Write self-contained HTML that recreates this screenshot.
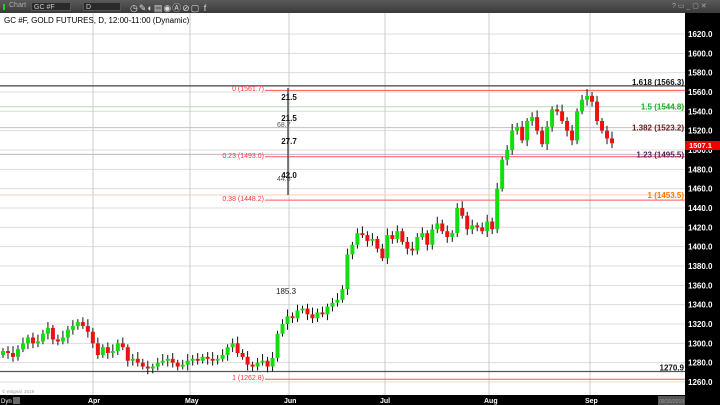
<!DOCTYPE html>
<html><head><style>
body{margin:0;width:720px;height:405px;overflow:hidden;background:#000;font-family:"Liberation Sans",sans-serif}
#tb{position:absolute;left:0;top:0;width:720px;height:13px;background:linear-gradient(#5a5a5a,#3a3a3a)}
.box{position:absolute;top:2px;height:9px;background:#2a2a2a;border:1px solid #555;color:#ccc;font-size:7px;line-height:9px;padding-left:2px;box-sizing:border-box}
#chart{position:absolute;left:0;top:13px;width:685px;height:382px;background:#fff}
</style></head><body>
<div id="tb">
<div style="position:absolute;left:3px;top:4px;width:2px;height:6px;background:#2c2"></div>
<div style="position:absolute;left:9px;top:2px;color:#aaa;font-size:7px">Chart</div>
<div class="box" style="left:31px;width:40px">GC #F</div>
<div class="box" style="left:83px;width:38px">D</div>
<div style="position:absolute;left:130px;top:1px;color:#ddd;font-size:9px;letter-spacing:1px">◷✎◐▤◉Ⓐ⊘▢ f</div>
<div style="position:absolute;left:672px;top:2px;color:#aaa;font-size:7px">? ▭ _ ▢ ✕</div>
</div>
<div id="chart"></div>
<svg id="s" width="720" height="405" style="position:absolute;left:0;top:0"></svg>
<script>
const Y=p=>34+(1620-p)*0.9667;
let h='';
h+='<rect x="685" y="13" width="35" height="392" fill="#000"/>';
h+='<rect x="0" y="395" width="720" height="10" fill="#000"/>';
for(let p=1260;p<=1620;p+=20){let y=Y(p);h+=`<line x1="0" x2="685" y1="${y}" y2="${y}" stroke="#ddd" stroke-width="1"/>`;h+=`<text x="688" y="${y+3}" fill="#fff" font-size="8" font-weight="bold">${p}.0</text>`;}
[93,190,289,385,489,590].forEach(x=>h+=`<line x1="${x}" x2="${x}" y1="13" y2="395" stroke="#ccc"/>`);
[['Apr',93],['May',190],['Jun',289],['Jul',385],['Aug',489],['Sep',590]].forEach(a=>h+=`<text x="${a[1]-5}" y="403" fill="#fff" font-size="7" font-weight="bold">${a[0]}</text>`);
h+='<text x="1" y="403" fill="#fff" font-size="6">Dyn</text><rect x="13" y="397" width="7" height="7" fill="#666"/>';
h+='<rect x="658" y="396" width="27" height="9" fill="#555"/><text x="659" y="403" fill="#999" font-size="5">09/30/2019</text>';
const L=(p,c,x1,w)=>h+=`<line x1="${x1}" x2="685" y1="${Y(p)}" y2="${Y(p)}" stroke="${c}" stroke-width="${w||1}"/>`;
L(1544.8,'#b8dcb8',0);L(1523.2,'#d8b8b8',0);L(1495.5,'#c8b0c8',0);L(1453.5,'#f5d0b0',0);
L(1566.3,'#444',0,1.3);L(1270.9,'#555',0,1.3);
L(1561.7,'#f55',265);L(1493,'#f55',265);L(1448.2,'#f55',265);L(1262.8,'#f55',265);
const T=(x,y,t,c,a,s)=>h+=`<text x="${x}" y="${y}" fill="${c}" font-size="${s||8}" font-weight="bold" text-anchor="${a||'end'}">${t}</text>`;
T(684,Y(1566.3)-1,'1.618 (1566.3)','#111');T(684,Y(1544.8)+3,'1.5 (1544.8)','#2a2');T(684,Y(1523.2)+3,'1.382 (1523.2)','#622');
T(684,Y(1495.5)+3,'1.23 (1495.5)','#525');T(684,Y(1453.5)+3,'1 (1453.5)','#f70');T(684,Y(1270.9)-1,'1270.9','#111');
h+='<text x="264" y="91" fill="#f33" font-size="7" text-anchor="end">0 (1561.7)</text>';
h+='<text x="264" y="158" fill="#f33" font-size="7" text-anchor="end">0.23 (1493.0)</text>';
h+='<text x="264" y="201" fill="#f33" font-size="7" text-anchor="end">0.38 (1448.2)</text>';
h+='<text x="264" y="380" fill="#f33" font-size="7" text-anchor="end">1 (1262.8)</text>';
h+='<line x1="288" x2="288" y1="88" y2="195" stroke="#555" stroke-width="1.5"/>';
[['21.5',100],['21.5',121],['27.7',144],['42.0',178]].forEach(a=>T(289,a[1],a[0],'#111','middle'));
h+='<text x="277" y="127" fill="#555" font-size="7">68.7</text><text x="277" y="181" fill="#555" font-size="7">44.8</text>';
h+='<text x="276" y="294" fill="#222" font-size="8">185.3</text>';
h+='<rect x="685" y="141" width="35" height="9" fill="#e00"/><text x="689" y="148" fill="#fff" font-size="7.5" font-weight="bold">1507.1</text>';
h+='<text x="2" y="393" fill="#999" font-size="4.5">© eSignal, 2019</text>';
h+='<text x="4" y="23" fill="#000" font-size="8">GC #F, GOLD FUTURES, D, 12:00-11:00 (Dynamic)</text>';
const c=[1292,1290,1286,1294,1300,1306,1300,1302,1310,1316,1304,1302,1306,1314,1318,1322,1318,1312,
1300,1288,1296,1290,1292,1300,1296,1282,1284,1280,1276,1274,1276,1280,1282,1284,1280,1276,1278,
1282,1284,1282,1286,1284,1282,1284,1288,1296,1300,1290,1286,1278,1276,1280,1282,1276,1285,
1310,1320,1328,1326,1334,1336,1330,1326,1332,1330,1338,1342,1345,1356,1392,1402,1414,1412,1406,1408,
1398,1388,1412,1408,1416,1405,1398,1396,1410,1414,1402,1418,1424,1416,1410,1414,1440,1432,1418,1422,1420,1416,1426,1418,
1460,1490,1500,1520,1524,1510,1530,1534,1520,1506,1524,1542,1540,1530,1520,1510,1540,1552,
1556,1550,1530,1520,1512,1507];
const n=c.length,dx=609/(n-1);let o=1288;
c.forEach((v,i)=>{let x=3+i*dx,hi=Math.max(o,v)+3+(i*7%5),lo=Math.min(o,v)-3-(i*3%4);
h+=`<line x1="${x}" x2="${x}" y1="${Y(hi)}" y2="${Y(lo)}" stroke="#111" stroke-width="1"/>`;
let t=Y(Math.max(o,v)),b=Y(Math.min(o,v));if(b-t<1.5)b=t+1.5;
h+=`<rect x="${x-2}" y="${t}" width="4" height="${b-t}" fill="${v>=o?'#1d1':'#e11'}"/>`;o=v;});
document.getElementById('s').innerHTML=h;
</script>
</body></html>
